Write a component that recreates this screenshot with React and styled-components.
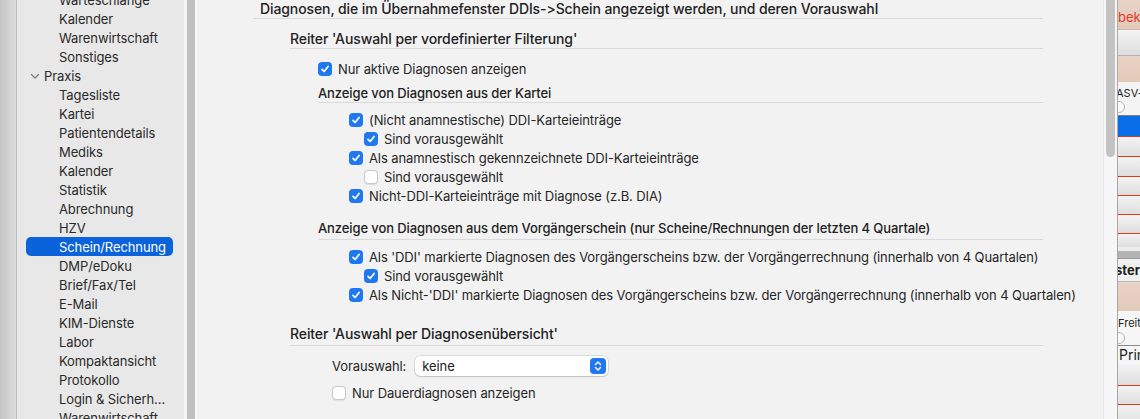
import React from "react";
import styled, { createGlobalStyle } from "styled-components";

const Global = createGlobalStyle`
  html, body { margin: 0; padding: 0; background: #f2f2f2; }
  body { font-family: Inter, "Noto Sans", sans-serif; -webkit-font-smoothing: antialiased; }
`;

const Window = styled.div`
  display: flex;
  width: 1140px;
  height: 419px;
  overflow: hidden;
  font-size: 13px;
  color: #262626;
`;

const LeftEdge = styled.div`
  width: 16px;
  flex: none;
  background: linear-gradient(to right, #c4c4c4, #dcdcdc);
  border-right: 1px solid #bcbcbc;
`;

const Sidebar = styled.nav`
  width: 167px;
  flex: none;
  background: #e8e8e8;
  overflow: hidden;
`;

const SideList = styled.ul`
  list-style: none;
  margin: -10px 0 0 0;
  padding: 0;
`;

const SideItem = styled.li`
  height: 19px;
  display: flex;
  align-items: center;
  margin: 0 11px 0 9px;
  padding-left: ${(p) => (p.$group ? 4 : 33)}px;
  border-radius: 5px;
  background: ${(p) => (p.$selected ? "#0b63dc" : "transparent")};
  color: ${(p) => (p.$selected ? "#ffffff" : "#2a2a2a")};
  white-space: nowrap;
  letter-spacing: -0.1px;
`;

const Chevron = styled.svg`
  width: 10px;
  height: 8px;
  margin-right: 4px;
`;

const Divider = styled.div`
  width: 8px;
  flex: none;
  background: #c0c0c0;
  border-left: 3px solid #f5f5f5;
  border-right: 2px solid #f9f9f9;
`;

const Content = styled.main`
  width: 906px;
  flex: none;
  background: #f2f2f2;
  padding-left: 56px;
  box-sizing: border-box;
`;

const Section = styled.div`
  width: 790px;
  display: flex;
  flex-direction: column;
`;

const Heading = styled.div`
  line-height: 18px;
  font-size: ${(p) => p.$size || 13}px;
  font-weight: 500;
  color: #222;
  margin-left: ${(p) => p.$indent || 0}px;
  margin-top: ${(p) => p.$top || 0}px;
  padding-left: ${(p) => p.$pad || 0}px;
  padding-bottom: ${(p) => p.$bottom || 0}px;
  border-bottom: 1px solid #dadada;
  white-space: nowrap;
  letter-spacing: -0.1px;
`;

const Row = styled.label`
  height: 19px;
  display: flex;
  align-items: center;
  gap: 6px;
  margin-left: ${(p) => p.$indent}px;
  margin-top: ${(p) => p.$top || 0}px;
  white-space: nowrap;
  color: #262626;
  letter-spacing: -0.1px;
`;

const Box = styled.span`
  width: 14px;
  height: 14px;
  flex: none;
  box-sizing: border-box;
  border-radius: 4px;
  display: flex;
  align-items: center;
  justify-content: center;
  background: ${(p) => (p.$checked ? "#1f78f0" : "#ffffff")};
  border: ${(p) => (p.$checked ? "none" : "1px solid #c9c9c9")};
  box-shadow: ${(p) => (p.$checked ? "none" : "0 0.5px 1px rgba(0,0,0,0.08)")};
`;

const Check = ({ checked }) => (
  <Box $checked={checked}>
    {checked && (
      <svg width="10" height="10" viewBox="0 0 10 10">
        <path d="M2 5.3 L4.1 7.5 L8.1 2.4" fill="none" stroke="#fff" strokeWidth="1.7" strokeLinecap="round" strokeLinejoin="round" />
      </svg>
    )}
  </Box>
);

const CheckRow = ({ indent, top, checked, children }) => (
  <Row $indent={indent} $top={top}>
    <Check checked={checked} />
    <span>{children}</span>
  </Row>
);

const SelectRow = styled.div`
  height: 20px;
  margin-top: 10px;
  margin-left: 79px;
  display: flex;
  align-items: center;
  gap: 9px;
  letter-spacing: -0.1px;
`;

const SelectBox = styled.div`
  width: 193px;
  height: 20px;
  box-sizing: border-box;
  background: #fff;
  border-radius: 5px;
  box-shadow: 0 0 0 0.5px rgba(0, 0, 0, 0.18), 0 1px 1.5px rgba(0, 0, 0, 0.12);
  display: flex;
  align-items: center;
  justify-content: space-between;
  padding: 0 2px 0 7px;
  color: #222;
`;

const Stepper = styled.span`
  width: 16px;
  height: 16px;
  border-radius: 4px;
  background: #1f78f0;
  display: flex;
  align-items: center;
  justify-content: center;
`;

const ScrollGutter = styled.div`
  width: 14px;
  flex: none;
  box-sizing: border-box;
  background: #f6f6f6;
  border-left: 1px solid #e6e6e6;
  padding: 0 2px 0 2px;
`;

const Thumb = styled.div`
  width: 9px;
  height: 157px;
  background: #c3c3c3;
  border-radius: 0 0 5px 5px;
`;

const RightStrip = styled.div`
  flex: 1;
  border-left: 1px solid #a8a8a8;
  display: flex;
  flex-direction: column;
  overflow: hidden;
  background: linear-gradient(#eeeeee, #dcdcdc);
`;

const StripRow = styled.div`
  height: ${(p) => p.$h}px;
  flex: none;
  box-sizing: border-box;
  background: ${(p) => p.$bg || "linear-gradient(#f3f3f3, #dedede)"};
  border-bottom: ${(p) => (p.$line ? `1px solid ${p.$line}` : "none")};
  display: flex;
  flex-direction: column;
  justify-content: ${(p) => p.$justify || "center"};
  white-space: nowrap;
  overflow: hidden;
`;

const StripText = styled.span`
  font-size: ${(p) => p.$size || 13}px;
  font-weight: ${(p) => p.$weight || 400};
  color: ${(p) => p.$color || "#222"};
  margin-left: ${(p) => p.$shift || 0}px;
  margin-top: ${(p) => p.$top || 0}px;
  line-height: ${(p) => p.$lh || 16}px;
`;

const Radio = styled.span`
  width: 10px;
  height: 10px;
  border-radius: 50%;
  border: 1px solid #b5b5b5;
  background: #fafafa;
  margin-left: -5px;
  margin-top: ${(p) => p.$top || 0}px;
  flex: none;
`;

const sidebarItems = [
  { t: "Warteschlange" },
  { t: "Kalender" },
  { t: "Warenwirtschaft" },
  { t: "Sonstiges" },
  { t: "Praxis", group: true },
  { t: "Tagesliste" },
  { t: "Kartei" },
  { t: "Patientendetails" },
  { t: "Mediks" },
  { t: "Kalender" },
  { t: "Statistik" },
  { t: "Abrechnung" },
  { t: "HZV" },
  { t: "Schein/Rechnung", selected: true },
  { t: "DMP/eDoku" },
  { t: "Brief/Fax/Tel" },
  { t: "E-Mail" },
  { t: "KIM-Dienste" },
  { t: "Labor" },
  { t: "Kompaktansicht" },
  { t: "Protokollo" },
  { t: "Login & Sicherh..." },
  { t: "Warenwirtschaft" },
];

const redLine = "#e4391e";
const beige = "linear-gradient(#e9d3c5, #e2cab9)";

export default function App() {
  return (
    <>
      <Global />
      <Window>
        <LeftEdge />
        <Sidebar>
          <SideList>
            {sidebarItems.map((it, i) => (
              <SideItem key={i} $group={it.group} $selected={it.selected}>
                {it.group && (
                  <Chevron viewBox="0 0 10 8">
                    <path d="M1.5 2.5 L5 6 L8.5 2.5" fill="none" stroke="#7a7a7a" strokeWidth="1.2" strokeLinecap="round" strokeLinejoin="round" />
                  </Chevron>
                )}
                {it.t}
              </SideItem>
            ))}
          </SideList>
        </Sidebar>
        <Divider />
        <Content>
          <Section>
            <Heading $pad={7} $size={14}>
              Diagnosen, die im Übernahmefenster DDIs-&gt;Schein angezeigt werden, und deren Vorauswahl
            </Heading>
            <Heading $indent={37} $top={11} $size={14}>
              Reiter 'Auswahl per vordefinierter Filterung'
            </Heading>
            <CheckRow indent={65} top={10} checked>
              Nur aktive Diagnosen anzeigen
            </CheckRow>
            <Heading $indent={65} $top={6}>
              Anzeige von Diagnosen aus der Kartei
            </Heading>
            <CheckRow indent={96} top={7} checked>
              (Nicht anamnestische) DDI-Karteieinträge
            </CheckRow>
            <CheckRow indent={111} checked>
              Sind vorausgewählt
            </CheckRow>
            <CheckRow indent={96} checked>
              Als anamnestisch gekennzeichnete DDI-Karteieinträge
            </CheckRow>
            <CheckRow indent={111} checked={false}>
              Sind vorausgewählt
            </CheckRow>
            <CheckRow indent={96} checked>
              Nicht-DDI-Karteieinträge mit Diagnose (z.B. DIA)
            </CheckRow>
            <Heading $indent={65} $top={14} $bottom={2}>
              Anzeige von Diagnosen aus dem Vorgängerschein (nur Scheine/Rechnungen der letzten 4 Quartale)
            </Heading>
            <CheckRow indent={96} top={7} checked>
              Als 'DDI' markierte Diagnosen des Vorgängerscheins bzw. der Vorgängerrechnung (innerhalb von 4 Quartalen)
            </CheckRow>
            <CheckRow indent={111} checked>
              Sind vorausgewählt
            </CheckRow>
            <CheckRow indent={96} checked>
              Als Nicht-'DDI' markierte Diagnosen des Vorgängerscheins bzw. der Vorgängerrechnung (innerhalb von 4 Quartalen)
            </CheckRow>
            <Heading $indent={37} $top={21} $bottom={2} $size={14}>
              Reiter 'Auswahl per Diagnosenübersicht'
            </Heading>
            <SelectRow>
              <span>Vorauswahl:</span>
              <SelectBox>
                <span>keine</span>
                <Stepper>
                  <svg width="10" height="12" viewBox="0 0 10 12">
                    <path d="M2.5 4.5 L5 2 L7.5 4.5 M2.5 7.5 L5 10 L7.5 7.5" fill="none" stroke="#fff" strokeWidth="1.4" strokeLinecap="round" strokeLinejoin="round" />
                  </svg>
                </Stepper>
              </SelectBox>
            </SelectRow>
            <CheckRow indent={79} top={7} checked={false}>
              Nur Dauerdiagnosen anzeigen
            </CheckRow>
          </Section>
        </Content>
        <ScrollGutter>
          <Thumb />
        </ScrollGutter>
        <RightStrip>
          <StripRow $h={30} $bg={beige} $line="#cdb9ab">
            <StripText $color={redLine} $lh={20} $top={5}>bek</StripText>
          </StripRow>
          <StripRow $h={26} $line="#b2b2b2" />
          <StripRow $h={26} $bg={beige} />
          <StripRow $h={34} $bg="#f4f4f4" $line="#7c7c7c" $justify="flex-start">
            <StripText $size={11} $shift={-2} $lh={14} $top={4}>ASV-T</StripText>
            <Radio $top={1} />
          </StripRow>
          <StripRow $h={21} $bg="#0a6de8" $line={redLine} />
          <StripRow $h={20} $line={redLine} />
          <StripRow $h={20} $line={redLine} />
          <StripRow $h={19} $line={redLine} />
          <StripRow $h={19} $line={redLine} />
          <StripRow $h={19} $line={redLine} />
          <StripRow $h={13} />
          <StripRow $h={4} $bg="#ececec" />
          <StripRow $h={8} $bg="#b3b3b3" $line="#999" />
          <StripRow $h={23} $bg="#f0f0f0" $line="#bbb">
            <StripText $weight={700} $shift={-3}>ster</StripText>
          </StripRow>
          <StripRow $h={29} $bg={beige} />
          <StripRow $h={35} $bg="#f6f6f6" $line="#8a8a8a" $justify="flex-start">
            <StripText $size={11} $lh={14} $top={5}>Freit</StripText>
            <Radio $top={2} />
          </StripRow>
          <StripRow $h={18} $bg="#f6f6f6">
            <StripText $size={14} $shift={1}>Prin</StripText>
          </StripRow>
          <StripRow $h={22} $line={redLine} />
          <StripRow $h={19} $line={redLine} />
          <StripRow $h={20} />
        </RightStrip>
      </Window>
    </>
  );
}
